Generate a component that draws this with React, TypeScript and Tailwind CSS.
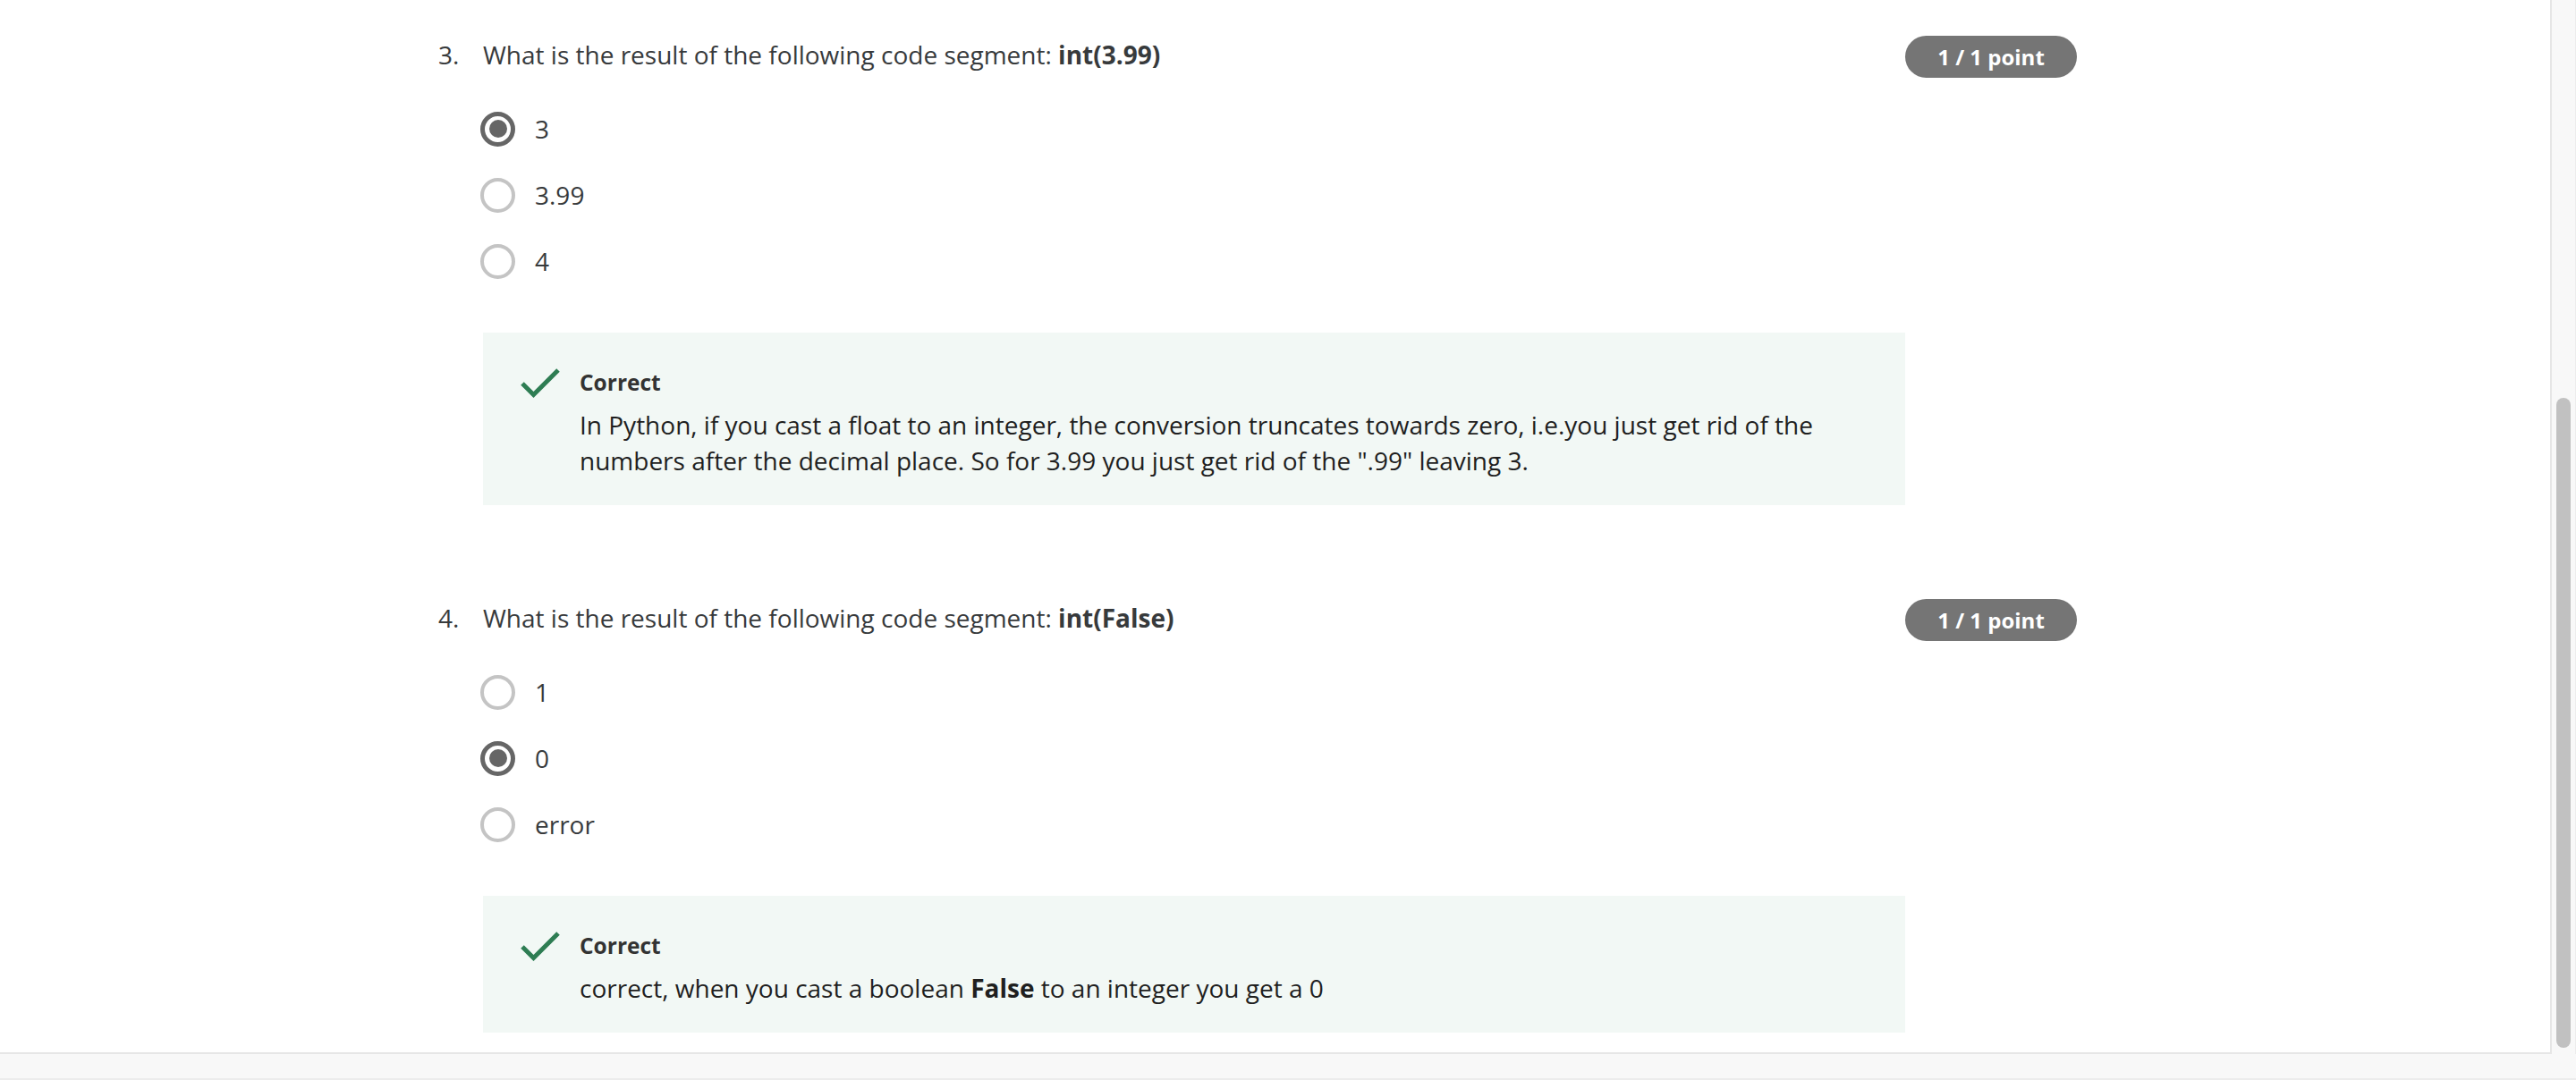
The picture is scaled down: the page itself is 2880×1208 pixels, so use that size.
import React from 'react';

type Option = { label: string; selected?: boolean };

type Question = {
  num: string;
  prompt: string;
  code: string;
  options: Option[];
  feedback: React.ReactNode;
};

const questions: Question[] = [
  {
    num: '3.',
    prompt: 'What is the result of the following code segment: ',
    code: 'int(3.99)',
    options: [{ label: '3', selected: true }, { label: '3.99' }, { label: '4' }],
    feedback: (
      <>
        In Python, if you cast a float to an integer, the conversion truncates towards zero, i.e.you just get rid of the
        numbers after the decimal place. So for 3.99 you just get rid of the ".99" leaving 3.
      </>
    ),
  },
  {
    num: '4.',
    prompt: 'What is the result of the following code segment: ',
    code: 'int(False)',
    options: [{ label: '1' }, { label: '0', selected: true }, { label: 'error' }],
    feedback: (
      <>
        correct, when you cast a boolean <b className="font-bold">False</b> to an integer you get a 0
      </>
    ),
  },
];

const Radio: React.FC<{ selected?: boolean }> = ({ selected }) =>
  selected ? (
    <span className="w-[39px] h-[39px] rounded-full border-[5px] border-[#666666] flex items-center justify-center shrink-0">
      <span className="w-[20px] h-[20px] rounded-full bg-[#666666]" />
    </span>
  ) : (
    <span className="w-[39px] h-[39px] rounded-full border-[4px] border-[#c4c4c4] shrink-0" />
  );

const CheckIcon = () => (
  <svg width="44" height="34" viewBox="0 0 44 34" fill="none" className="shrink-0">
    <path d="M2 17 L14.5 29.5 L42 2" stroke="#2e7d53" strokeWidth="5" />
  </svg>
);

const QuestionBlock: React.FC<{ q: Question }> = ({ q }) => (
  <section className="w-[1832px]">
    <div className="flex items-start justify-between h-[47px]">
      <div className="flex text-[28px] leading-[43px] text-[#373a3c]">
        <span className="w-[50px]">{q.num}</span>
        <span>
          {q.prompt}
          <b className="font-bold">{q.code}</b>
        </span>
      </div>
      <span className="w-[192px] h-[47px] rounded-full bg-[#757575] text-white font-bold text-[24px] flex items-center justify-center">
        1 / 1 point
      </span>
    </div>

    <div className="pl-[47px] mt-[20px] flex flex-col">
      {q.options.map((o) => (
        <label key={o.label} className="h-[74px] flex items-center gap-[22px] text-[28px] text-[#373a3c]">
          <Radio selected={o.selected} />
          <span>{o.label}</span>
        </label>
      ))}
    </div>

    <div className="ml-[50px] mt-[43px] w-[1590px] bg-[#f2f8f5] pl-[42px] pr-[43px] pt-[38px] pb-[30px] flex gap-[22px]">
      <div className="pt-[2px]">
        <CheckIcon />
      </div>
      <div className="flex flex-col">
        <span className="font-bold text-[24.5px] leading-[36px] text-[#333333]">Correct</span>
        <p className="mt-[9px] text-[28px] leading-[40px] text-[#1f1f1f]">{q.feedback}</p>
      </div>
    </div>
  </section>
);

export default function App() {
  return (
    <div className="w-[2880px] h-[1208px] flex flex-col bg-white overflow-hidden font-['Open_Sans',sans-serif]">
      <div className="flex h-[1179px]">
        <main className="flex-1 border-r-2 border-b-2 border-[#e6e6e6] overflow-hidden pl-[490px] pt-[40px] flex flex-col gap-[105px]">
          {questions.map((q) => (
            <QuestionBlock key={q.num} q={q} />
          ))}
        </main>
        <div className="w-[27px] bg-[#f8f8f8] border-r border-[#ececec] pt-[445px] pl-[5px]">
          <div className="w-[16px] h-[727px] rounded-full bg-[#c1c1c1]" />
        </div>
      </div>
      <div className="flex-1 bg-[#f8f8f8] border-b-2 border-[#ececec]" />
    </div>
  );
}
